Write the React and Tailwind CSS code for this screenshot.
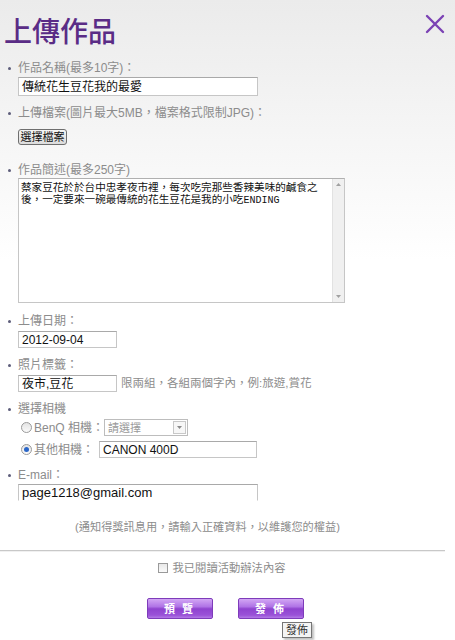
const font = { fontFamily: '"Liberation Sans", "Noto Sans CJK TC", sans-serif' }

function Label({ children, className = '' }) {
  return (
    <div className={`flex h-4 items-center text-[12px] leading-4 text-[#8c8c8c] ${className}`}>
      <span className="ml-[8px] mr-[7px] h-[3px] w-[3px] rounded-full bg-[#5d5d7a]" />
      <span>{children}</span>
    </div>
  )
}

function Field({ value, className = '', noBottom = false }) {
  return (
    <div
      className={`flex items-center border border-[#c6c6c6] border-t-[#a9a9a9] bg-white px-[3px] text-[12px] text-[#111] ${noBottom ? 'border-b-transparent' : ''} ${className}`}
    >
      {value}
    </div>
  )
}

function Radio({ checked }) {
  return (
    <span className="flex h-[11px] w-[11px] items-center justify-center rounded-full border border-[#9a9a9a] bg-gradient-to-b from-[#e4e4e4] to-[#fafafa]">
      {checked && <span className="h-[5px] w-[5px] rounded-full bg-[#2a66c8]" />}
    </span>
  )
}

export default function App() {
  return (
    <div
      className="min-h-[640px] w-[455px] bg-[linear-gradient(to_bottom,#ebebeb,#ffffff_260px)] pt-[15px]"
      style={font}
    >
      <div className="flex items-start justify-between pr-[8px]">
        <h1 className="pl-[4px] text-[28px] font-medium leading-[36px] text-[#5a2c86]">上傳作品</h1>
        <svg width="22" height="22" viewBox="0 0 22 22" className="mr-[1px] mt-[-2px]">
          <path d="M3 3 L19 19 M19 3 L3 19" stroke="#7b42b4" strokeWidth="2.4" strokeLinecap="round" />
        </svg>
      </div>

      <Label className="mt-[9px]">作品名稱(最多10字)：</Label>
      <div className="ml-[18px] mt-[1px]">
        <Field value="傳統花生豆花我的最愛" className="h-[19px] w-[240px]" />
      </div>

      <Label className="mt-[9px]">上傳檔案(圖片最大5MB，檔案格式限制JPG)：</Label>
      <div className="ml-[18px] mt-[8px]">
        <button className="flex h-[16px] w-[49px] items-center justify-center rounded-[3px] border border-[#6f6f6f] bg-gradient-to-b from-[#f6f6f6] to-[#dcdcdc] text-[11px] leading-none text-[#111]">
          選擇檔案
        </button>
      </div>

      <Label className="mt-[17px]">作品簡述(最多250字)</Label>
      <div className="ml-[18px] flex h-[125px] w-[327px] border border-[#c6c6c6] border-t-[#b0b0b0] bg-white">
        <div className="flex-1 px-[2px] pt-[2px] text-[10.6px] leading-[12px] text-[#111]">
          <div>蔡家豆花於於台中忠孝夜市裡，每次吃完那些香辣美味的鹹食之</div>
          <div>
            後，一定要來一碗最傳統的花生豆花是我的小吃
            <span style={{ fontFamily: '"Liberation Mono", monospace' }} className="text-[10px]">ENDING</span>
          </div>
        </div>
        <div className="flex w-[12px] flex-col items-center justify-between border-l border-[#e2e2e2] bg-[#f0f0f0] py-[4px]">
          <svg width="5" height="3" viewBox="0 0 5 3"><path d="M0 3 L2.5 0 L5 3Z" fill="#a0a0a0" /></svg>
          <svg width="5" height="3" viewBox="0 0 5 3"><path d="M0 0 L2.5 3 L5 0Z" fill="#a0a0a0" /></svg>
        </div>
      </div>

      <Label className="mt-[10px]">上傳日期：</Label>
      <div className="ml-[18px] mt-[2px]">
        <Field value="2012-09-04" className="h-[17px] w-[99px]" />
      </div>

      <Label className="mt-[9px]">照片標籤：</Label>
      <div className="ml-[18px] mt-[2px] flex items-center gap-[4px]">
        <Field value="夜市,豆花" className="h-[17px] w-[99px]" />
        <span className="text-[11.5px] text-[#8c8c8c]">限兩組，各組兩個字內，例:旅遊,賞花</span>
      </div>

      <Label className="mt-[9px]">選擇相機</Label>
      <div className="ml-[21px] mt-[2px] flex h-[17px] items-center">
        <Radio />
        <span className="ml-[2px] text-[12px] text-[#8c8c8c]">BenQ 相機：</span>
        <div className="flex h-[17px] w-[84px] items-center justify-between border border-[#bdbdbd] bg-white pl-[3px] pr-[1px]">
          <span className="text-[11px] text-[#9a9a9a]">請選擇</span>
          <span className="flex h-[13px] w-[13px] items-center justify-center border border-[#c8c8c8] bg-[#f7f7f7]">
            <svg width="5" height="3" viewBox="0 0 5 3"><path d="M0 0 L2.5 3 L5 0Z" fill="#8a8a8a" /></svg>
          </span>
        </div>
      </div>
      <div className="ml-[21px] mt-[5px] flex h-[17px] items-center">
        <Radio checked />
        <span className="ml-[2px] text-[12px] text-[#8c8c8c]">其他相機：</span>
        <Field value="CANON 400D" className="ml-[5px] h-[17px] w-[158px]" />
      </div>

      <Label className="mt-[9px]">E-mail：</Label>
      <div className="ml-[18px] mt-[1px]">
        <Field value="page1218@gmail.com" className="h-[17px] w-[240px] text-[13px]" noBottom />
      </div>

      <p className="mt-[18px] pr-[40px] text-center text-[11.2px] leading-4 text-[#8c8c8c]">
        (通知得獎訊息用，請輸入正確資料，以維護您的權益)
      </p>

      <div className="mt-[15px] h-px w-[445px] bg-[#c8c8c8] shadow-[0_1px_0_#f0f0f0]" />

      <div className="mt-[9px] flex h-4 items-center justify-center pr-[12px]">
        <span className="h-[10px] w-[10px] border border-[#9a9a9a] bg-gradient-to-b from-[#e8e8e8] to-[#fafafa]" />
        <span className="ml-[5px] text-[11.3px] text-[#8c8c8c]">我已閱讀活動辦法內容</span>
      </div>

      <div className="relative mt-[22px] flex justify-center gap-[25px] pr-[5px]">
        {['預 覽', '發 佈'].map((t) => (
          <button
            key={t}
            className="flex h-[21px] w-[66px] items-center justify-center rounded-[2px] border border-[#7e3cba] bg-[linear-gradient(to_bottom,#d2a6f4,#b074e6_40%,#8f43cf_52%,#9a52d8_85%,#b27ae6)] text-[11px] font-bold tracking-[2px] text-white"
          >
            {t}
          </button>
        ))}
        <div className="absolute left-[282px] top-[24px] border border-[#767676] bg-[#f4f4f4] px-[3px] text-[11px] leading-[14px] text-[#333] shadow-[2px_2px_2px_rgba(0,0,0,0.25)]">
          發佈
        </div>
      </div>
    </div>
  )
}
